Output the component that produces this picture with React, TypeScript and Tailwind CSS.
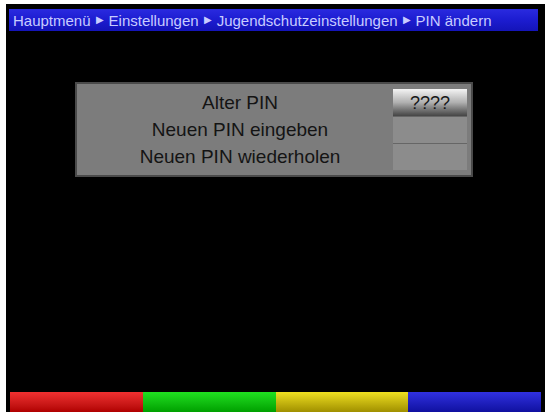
export default function App() {
  const rows = [
    { label: 'Alter PIN', value: '????', active: true },
    { label: 'Neuen PIN eingeben', value: '', active: false },
    { label: 'Neuen PIN wiederholen', value: '', active: false },
  ];
  const crumbs = ['Hauptmenü', 'Einstellungen', 'Jugendschutzeinstellungen', 'PIN ändern'];

  return (
    <div className="w-[548px] h-[412px] bg-white pt-[4px] pl-[6px] pr-[3px] overflow-hidden font-['Liberation_Sans',Arial,sans-serif]">
      <div className="flex h-[408px] flex-col bg-black">
        {/* breadcrumb bar */}
        <div className="mt-[5px] ml-[3px] mr-[7px] flex h-[22px] items-center bg-gradient-to-b from-[#2a2ae0] via-[#1c1cd0] to-[#1414b8] pl-[4px] text-[15px] leading-none text-[#c8ccff]">
          {crumbs.map((c, i) => (
            <span key={c} className="flex items-center">
              {i > 0 && <span className="mx-[5px] text-[10px]">▶</span>}
              {c}
            </span>
          ))}
        </div>

        {/* PIN dialog */}
        <div className="mt-[51px] ml-[69px] w-[398px] h-[95px] border-2 border-[#4a4a4a] bg-[#7c7c7c] pt-[5px] pl-[10px] pr-[4px]">
          {rows.map((r) => (
            <div key={r.label} className="flex h-[27px] items-stretch">
              <div className="flex flex-1 items-center justify-center text-[19px] leading-none text-[#141414]">
                {r.label}
              </div>
              <div
                className={
                  r.active
                    ? 'flex w-[74px] items-center justify-center bg-gradient-to-b from-[#f4f4f4] via-[#b0b0b0] to-[#454545] text-[18px] leading-none text-[#181818]'
                    : 'w-[74px] border-t border-[#666666] bg-[#8c8c8c]'
                }
              >
                {r.value}
              </div>
            </div>
          ))}
        </div>

        <div className="flex-1" />

        {/* colour keys */}
        <div className="ml-[4px] mr-[4px] flex h-[20px]">
          <div className="flex-1 bg-gradient-to-b from-[#f03030] to-[#b00000]" />
          <div className="flex-1 bg-gradient-to-b from-[#20e020] to-[#00a000]" />
          <div className="flex-1 bg-gradient-to-b from-[#f0e020] to-[#a09000]" />
          <div className="flex-1 bg-gradient-to-b from-[#3030e0] to-[#1010a0]" />
        </div>
      </div>
    </div>
  );
}
